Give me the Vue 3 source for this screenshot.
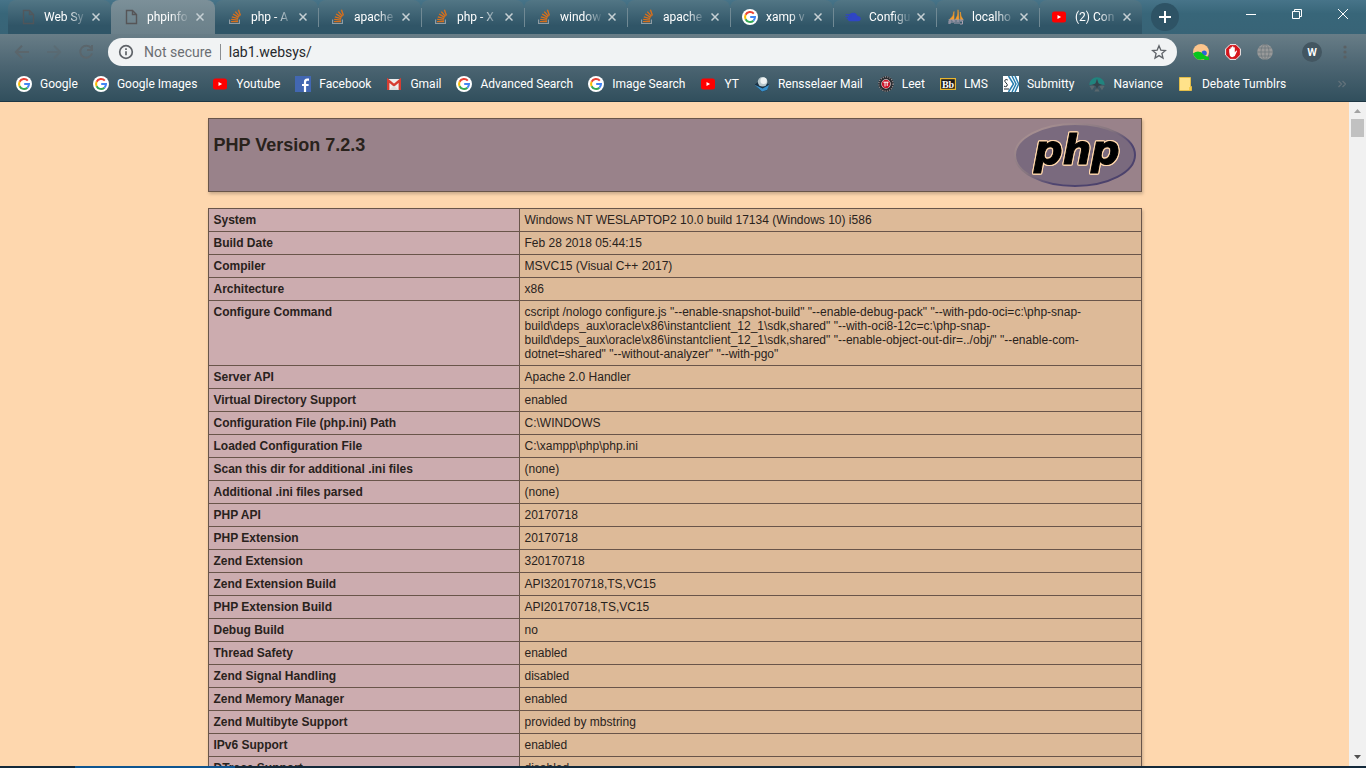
<script setup>
import { ref } from 'vue'

const tabs = [
  { title: 'Web Sy', icon: 'page' },
  { title: 'phpinfo', icon: 'page', active: true },
  { title: 'php - A', icon: 'stack' },
  { title: 'apache', icon: 'stack' },
  { title: 'php - X', icon: 'stack' },
  { title: 'window', icon: 'stack' },
  { title: 'apache', icon: 'stack' },
  { title: 'xamp v', icon: 'google' },
  { title: 'Configu', icon: 'cloud' },
  { title: 'localho', icon: 'pma' },
  { title: '(2) Con', icon: 'youtube' }
]

const bookmarks = [
  { title: 'Google', icon: 'google' },
  { title: 'Google Images', icon: 'google' },
  { title: 'Youtube', icon: 'youtube' },
  { title: 'Facebook', icon: 'facebook' },
  { title: 'Gmail', icon: 'gmail' },
  { title: 'Advanced Search', icon: 'google' },
  { title: 'Image Search', icon: 'google' },
  { title: 'YT', icon: 'youtube' },
  { title: 'Rensselaer Mail', icon: 'mail' },
  { title: 'Leet', icon: 'leet' },
  { title: 'LMS', icon: 'bb' },
  { title: 'Submitty', icon: 'submitty' },
  { title: 'Naviance', icon: 'naviance' },
  { title: 'Debate Tumblrs', icon: 'folder' }
]

const rows = [
  ['System', 'Windows NT WESLAPTOP2 10.0 build 17134 (Windows 10) i586'],
  ['Build Date', 'Feb 28 2018 05:44:15'],
  ['Compiler', 'MSVC15 (Visual C++ 2017)'],
  ['Architecture', 'x86'],
  ['Configure Command', 'cscript /nologo configure.js "--enable-snapshot-build" "--enable-debug-pack" "--with-pdo-oci=c:\\php-snap-\nbuild\\deps_aux\\oracle\\x86\\instantclient_12_1\\sdk,shared" "--with-oci8-12c=c:\\php-snap-\nbuild\\deps_aux\\oracle\\x86\\instantclient_12_1\\sdk,shared" "--enable-object-out-dir=../obj/" "--enable-com-\ndotnet=shared" "--without-analyzer" "--with-pgo"'],
  ['Server API', 'Apache 2.0 Handler'],
  ['Virtual Directory Support', 'enabled'],
  ['Configuration File (php.ini) Path', 'C:\\WINDOWS'],
  ['Loaded Configuration File', 'C:\\xampp\\php\\php.ini'],
  ['Scan this dir for additional .ini files', '(none)'],
  ['Additional .ini files parsed', '(none)'],
  ['PHP API', '20170718'],
  ['PHP Extension', '20170718'],
  ['Zend Extension', '320170718'],
  ['Zend Extension Build', 'API320170718,TS,VC15'],
  ['PHP Extension Build', 'API20170718,TS,VC15'],
  ['Debug Build', 'no'],
  ['Thread Safety', 'enabled'],
  ['Zend Signal Handling', 'disabled'],
  ['Zend Memory Manager', 'enabled'],
  ['Zend Multibyte Support', 'provided by mbstring'],
  ['IPv6 Support', 'enabled'],
  ['DTrace Support', 'disabled']
]

const address = ref('lab1.websys/')
</script>

<template>
  <div class="browser">
    <svg class="defs" aria-hidden="true">
      <symbol id="i-page" viewBox="0 0 16 16">
        <path d="M3.5 1.5h6l4 4v9h-10zM9.5 1.5v4h4" fill="none" stroke="#565557" stroke-width="1.4" />
      </symbol>
      <symbol id="i-stack" viewBox="0 0 16 16">
        <path d="M2.6 10.5v4h9.8v-4" fill="none" stroke="#8f9ca4" stroke-width="1.2" />
        <path d="M4 12.6h7M4.2 10.4l6.8.7M4.8 7.8l6.4 1.8M6.1 5l5.6 3.4M8.3 2.6l4.2 4.8M11.4.8l2 5.8" fill="none" stroke="#d8701c" stroke-width="1.4" />
      </symbol>
      <symbol id="i-google" viewBox="0 0 16 16">
        <circle cx="8" cy="8" r="8" fill="#fff" />
        <path d="M11.8 4.7A5 5 0 0 0 3.6 5.8" fill="none" stroke="#ea4335" stroke-width="2" />
        <path d="M3.6 5.8a5 5 0 0 0 0 4.4" fill="none" stroke="#fbbc05" stroke-width="2" />
        <path d="M3.6 10.2a5 5 0 0 0 7.8 1.5" fill="none" stroke="#34a853" stroke-width="2" />
        <path d="M11.4 11.7A5 5 0 0 0 13 8H8.2" fill="none" stroke="#4285f4" stroke-width="2" />
      </symbol>
      <symbol id="i-youtube" viewBox="0 0 16 16">
        <rect x="1" y="2.5" width="14" height="11" rx="2.5" fill="#f00" />
        <path d="M6.5 6v4l3.6-2z" fill="#fff" />
      </symbol>
      <symbol id="i-facebook" viewBox="0 0 16 16">
        <path d="M0 0h16v16H0z" fill="#4267b2" />
        <path d="M10 16V6.2Q10 3.6 12.2 3.6H14M7 9h6.6" fill="none" stroke="#fff" stroke-width="2.2" />
      </symbol>
      <symbol id="i-gmail" viewBox="0 0 16 16">
        <path d="M1 3h14v11H1z" fill="#eee" />
        <path d="M2.2 14V4.4L8 9.2l5.8-4.8V14" fill="none" stroke="#d63d32" stroke-width="2.4" />
        <path d="M3.4 14 8 9.8l4.6 4.2z" fill="#ddd" />
      </symbol>
      <symbol id="i-cloud" viewBox="0 0 16 16">
        <path d="M4.5 12.3a3 3 0 0 1-.6-5.2Q5 3.6 8.6 3.8q3 .2 3.9 3.2 3.4.3 3.3 3-.2 2.3-2.9 2.3z" fill="#2f46c4" />
        <path d="M.8 5.7h6M.2 7.7h6M1.5 9.7h4" stroke="#2f46c4" />
      </symbol>
      <symbol id="i-pma" viewBox="0 0 16 16">
        <path d="M6 2.5Q6 7 1.5 10.5H6zM10 .8q.4 6-2.5 9.7H11zM12.3 3q.2 5 2.7 7.5h-2.5z" fill="#f89c28" stroke="#f89c28" stroke-width=".6" />
        <path d="M.5 11h15M1 15v-3h2v2H1m4-3v3m0-2h2v3m2-3v3m0-3h2v3m1-3h2.5v3H12" stroke="#aaa0b0" fill="none" />
      </symbol>
      <symbol id="i-mail" viewBox="0 0 16 16">
        <path d="M.8 8.5 7 4l8.2 4.8-2.4 5.6-5.2 1.2z" fill="#1a3144" />
        <path d="M.6 8.7 8.6 12.6l6.7-3.9-2.2 5.2-5.1 1.7z" fill="#388fca" />
        <circle cx="8.6" cy="5.8" r="4.8" fill="#b9c8cc" />
        <circle cx="9.6" cy="4.7" r="3.2" fill="#eef2f2" />
      </symbol>
      <symbol id="i-leet" viewBox="0 0 16 16">
        <circle cx="8" cy="8" r="6.2" fill="#eee" stroke="#2b2c30" stroke-width="3" />
        <circle cx="8" cy="8" r="7.1" fill="none" stroke="#a09a9c" stroke-width="1.3" stroke-dasharray="1 1.3" />
        <circle cx="8" cy="8" r="4.2" fill="#cc1528" />
        <path d="M5.4 6.2h5.2M7 6v4.5M9.2 6v4" stroke="#fff" />
      </symbol>
      <symbol id="i-bb" viewBox="0 0 16 16">
        <path d="M.6 2.6h14.8v10.8H.6z" fill="#19191b" stroke="#e8b630" stroke-width="1.2" />
        <text x="8" y="11.5" text-anchor="middle" font-family="Liberation Serif, serif" font-size="10" font-weight="700" fill="#fff">Bb</text>
      </symbol>
      <symbol id="i-submitty" viewBox="0 0 16 16">
        <path d="M0 0h16v16H0z" fill="#fff" />
        <path d="M4.8 4Q3 2.8 1.8 4.3q-.2 1.5 1.2 2.6 2 1.6 1 3.1-1.2 1.2-3 .2M1 13h5" fill="none" stroke="#222d33" />
        <path d="m5.5 0 5 8-5 8M9 0l4 8-4 8M12 0l3.6 8-3.6 8" fill="none" stroke="#277eae" stroke-width="1.5" />
      </symbol>
      <symbol id="i-naviance" viewBox="0 0 16 16">
        <path d="M.3 9a7.7 7.7 0 1 1 15.4 0L10 8 8 3 6 8z" fill="#21847e" />
        <path d="m.5 10 5.7-.8L3 14.3zm15 0-5.7-.8 3.2 5.1zM8 11l2.6 4.4H5.4z" fill="#5a686e" />
        <path d="m8 3 1.2 4.2L13 9l-3.8 1L8 14l-1.2-4L3 9l3.8-1.8z" fill="#34444c" />
      </symbol>
      <symbol id="i-folder" viewBox="0 0 16 16">
        <path d="M1.5 1.5h11v9h1v4h-12z" fill="#ffe28a" stroke="#e3bd48" />
        <path d="M11 11h2v3h-2z" fill="#f5cc4e" />
      </symbol>
    </svg>

    <header class="chrome">
      <div class="strip">
        <nav class="tabs" aria-label="Tabs">
          <div v-for="(t, i) in tabs" :key="i" class="tab" :class="{ active: t.active }">
            <button class="tab-main" type="button">
              <svg class="ico" :class="{ faint: t.icon === 'page' && !t.active }"><use :href="'#i-' + t.icon" /></svg>
              <span class="tab-title">{{ t.title }}</span>
            </button>
            <button class="close" type="button" aria-label="Close tab">
              <svg viewBox="0 0 8 8"><path d="m.5.5 7 7m0-7-7 7" /></svg>
            </button>
          </div>
        </nav>
        <button class="newtab" type="button" aria-label="New tab">
          <svg viewBox="0 0 12 12"><path d="M6 0v12M0 6h12" /></svg>
        </button>
        <div class="winctl">
          <button type="button" aria-label="Minimize"><svg viewBox="0 0 10 10"><path d="M0 5.5h10" /></svg></button>
          <button type="button" aria-label="Restore"><svg viewBox="0 0 10 10"><path d="M.5 2.5h7v7h-7zM2.5 2.5v-2h7v7h-2" /></svg></button>
          <button type="button" aria-label="Close"><svg viewBox="0 0 10 10"><path d="m0 0 10 10M10 0 0 10" /></svg></button>
        </div>
      </div>

      <div class="toolbar">
        <div class="nav">
          <button type="button" aria-label="Back"><svg viewBox="0 0 16 16"><path d="M15 8H2M8 1.8 1.8 8 8 14.2" /></svg></button>
          <button type="button" class="dim" aria-label="Forward"><svg viewBox="0 0 16 16"><path d="M1 8h13M8 1.8 14.2 8 8 14.2" /></svg></button>
          <button type="button" aria-label="Reload"><svg viewBox="0 0 16 16"><path d="M13.2 4.2a6 6 0 1 0 .8 5.3M14 1v5H9" /></svg></button>
        </div>
        <div class="omnibox">
          <svg class="info" viewBox="0 0 16 16"><circle cx="8" cy="8" r="6.3" /><path d="M8 7.2v4M8 4.3v1.6" /></svg>
          <label for="url">Not secure</label>
          <input id="url" v-model="address" type="text" spellcheck="false">
          <button type="button" aria-label="Bookmark this page">
            <svg viewBox="0 0 16 16"><path d="m8 1.8 1.8 4.3 4.7.4-3.6 3 1.1 4.6-4-2.5-4 2.5 1.1-4.6-3.6-3 4.7-.4z" /></svg>
          </button>
        </div>
        <div class="ext">
          <button type="button" aria-label="Avatar extension">
            <svg viewBox="0 0 16 16"><circle cx="8" cy="8" r="8" fill="#fcc58c" /><circle cx="11.2" cy="9" r="2.6" fill="#2e63d8" /><path d="M0 9.5Q6 5 11 11l2.5 1.2 2.5 1v2.8H12l-1-1q-8 3-11-5.5z" fill="#08c51d" /></svg>
          </button>
          <button type="button" aria-label="Ad blocker">
            <svg viewBox="0 0 16 16"><path d="M5 .6h6L15.4 5v6L11 15.4H5L.6 11V5z" fill="#d4151c" stroke="#eee" /><path d="M4.2 8V5q.7-.6 1.3 0v3V3.5q.7-.7 1.4 0V7.5v-5q.8-.7 1.5 0v5-4q.7-.6 1.4 0v5l1.4-2q1 0 .8.8L9.8 12q-3.3 2.5-5-.4z" fill="#fff" /></svg>
          </button>
          <button type="button" aria-label="Globe extension">
            <svg viewBox="0 0 16 16"><circle cx="8" cy="8" r="7.8" fill="#999a9a" /><path d="M8 0v16M0 8h16M1.5 4h13M1.5 12h13" stroke="#6d777c" stroke-width=".8" fill="none" /><ellipse cx="8" cy="8" rx="4" ry="7.8" stroke="#6d777c" stroke-width=".8" fill="none" /></svg>
          </button>
          <button type="button" class="avatar" aria-label="Profile">W</button>
          <button type="button" aria-label="Menu">
            <svg viewBox="0 0 16 16"><g fill="#5a6063"><circle cx="7" cy="3" r="1.6" /><circle cx="7" cy="8" r="1.6" /><circle cx="7" cy="13" r="1.6" /></g></svg>
          </button>
        </div>
      </div>

      <nav class="bookmarks" aria-label="Bookmarks">
        <a v-for="(b, i) in bookmarks" :key="i" href="#">
          <svg class="ico"><use :href="'#i-' + b.icon" /></svg>{{ b.title }}
        </a>
        <button class="more" type="button" aria-label="More bookmarks">
          <svg viewBox="0 0 8 8"><path d="m.5 1 3 3-3 3M4.5 1l3 3-3 3" /></svg>
        </button>
      </nav>
    </header>

    <div class="viewport">
      <main class="page">
        <section class="banner">
          <h1>PHP Version 7.2.3</h1>
          <svg class="logo" viewBox="0 0 122 66" role="img" aria-label="PHP logo">
            <defs>
              <linearGradient id="rim" x1="0" y1="0" x2="1" y2="1">
                <stop offset="0" stop-color="#b49a98" />
                <stop offset=".45" stop-color="#85757f" />
                <stop offset=".65" stop-color="#4e4470" />
                <stop offset="1" stop-color="#4a4068" />
              </linearGradient>
            </defs>
            <ellipse cx="61" cy="33" rx="60" ry="31" fill="#7a6a7e" stroke="url(#rim)" stroke-width="2" />
            <text x="20" y="42">php</text>
          </svg>
        </section>
        <table>
          <tbody>
            <tr v-for="r in rows" :key="r[0]">
              <th scope="row">{{ r[0] }}</th>
              <td>{{ r[1] }}</td>
            </tr>
          </tbody>
        </table>
      </main>
      <div class="scrollbar" aria-hidden="true">
        <svg viewBox="0 0 7 4"><path d="M0 4 3.5 0 7 4z" fill="#a3a3a3" /></svg>
        <div class="thumb"></div>
        <svg viewBox="0 0 7 4"><path d="M0 0h7L3.5 4z" fill="#505050" /></svg>
      </div>
    </div>
    <div class="taskbar"></div>
  </div>
</template>

<style>
body {
  margin: 0;
  overflow: hidden;
}
</style>

<style scoped>
* {
  box-sizing: border-box;
}
.browser {
  height: 100vh;
  display: flex;
  flex-direction: column;
  font: 12px Roboto, "Open Sans", sans-serif;
  color: #fff;
}
.defs {
  position: absolute;
  width: 0;
  height: 0;
}
button {
  border: 0;
  padding: 0;
  background: none;
  color: inherit;
  font: inherit;
  display: flex;
  align-items: center;
  justify-content: center;
}
svg {
  display: block;
  flex: none;
}
.ico {
  width: 16px;
  height: 16px;
}
.faint {
  opacity: 0.8;
}
.strip {
  display: flex;
  height: 34px;
  padding-left: 8px;
  background: linear-gradient(#477489, #386679 40%, #386477);
}
.tabs {
  display: flex;
}
.tab {
  width: 103px;
  display: flex;
  align-items: center;
  padding: 0 11px 0 12px;
  border-radius: 8px 8px 0 0;
  background: linear-gradient(#527685, #305567 75%, #2f5567);
  position: relative;
}
.tab.active {
  width: 104px;
  background: linear-gradient(#7c9099, #71868f 50%, #6b808a);
}
.tab:nth-child(n + 4)::before {
  content: "";
  position: absolute;
  left: 0;
  top: 8px;
  width: 1px;
  height: 19px;
  background: #708994;
}
.tab-main {
  flex: 1;
  min-width: 0;
  justify-content: flex-start;
  gap: 8px;
}
.tab-title {
  width: 43px;
  white-space: nowrap;
  text-align: left;
  mask-image: linear-gradient(90deg, #000 55%, transparent);
}
.close svg {
  width: 8px;
  height: 8px;
}
.close path {
  stroke: #c6d0d4;
  stroke-width: 1.5;
}
.newtab {
  align-self: center;
  width: 28px;
  height: 28px;
  margin-left: 9px;
  border-radius: 50%;
  background: #2e5365;
}
.newtab svg {
  width: 12px;
  height: 12px;
}
.newtab path {
  stroke: #fff;
  stroke-width: 2;
}
.winctl {
  display: flex;
  margin-left: auto;
  height: 28px;
}
.winctl button {
  width: 46px;
}
.winctl svg {
  width: 10px;
  height: 10px;
}
.winctl path {
  fill: none;
  stroke: #fff;
}
.chrome {
  height: 102px;
  border-bottom: 1px solid #1e3744;
  background: linear-gradient(#687d87 34px, #4c6572 66px, #314f5d 101px);
}
.toolbar {
  display: flex;
  align-items: center;
  height: 36px;
}
.nav {
  display: flex;
  gap: 16px;
  padding: 0 14px;
}
.nav svg {
  width: 16px;
  height: 16px;
}
.nav path {
  fill: none;
  stroke: #5b666c;
  stroke-width: 2;
}
.nav .dim {
  opacity: 0.5;
}
.omnibox {
  flex: 1;
  height: 28px;
  display: flex;
  align-items: center;
  padding: 0 10px;
  border-radius: 14px;
  background: #f1f3f4;
  font-size: 14px;
  color: #6b6e72;
}
.omnibox svg {
  width: 16px;
  height: 16px;
  fill: none;
  stroke: #5f6368;
  stroke-width: 1.3;
}
.omnibox .info {
  stroke-width: 1.7;
}
.omnibox label {
  margin-left: 10px;
  padding-right: 8px;
  line-height: 16px;
  border-right: 1px solid #8b8e91;
}
.omnibox input {
  flex: 1;
  min-width: 0;
  border: 0;
  padding: 0 8px;
  outline: 0;
  background: none;
  font: inherit;
  color: #25282c;
}
.ext {
  display: flex;
  align-items: center;
  gap: 16px;
  padding: 0 12px 0 16px;
}
.ext svg {
  width: 16px;
  height: 16px;
}
.avatar {
  width: 20px;
  height: 20px;
  margin-left: 13px;
  border-radius: 50%;
  background: #435661;
  font-size: 11px;
  font-weight: 600;
}
.bookmarks {
  display: flex;
  align-items: center;
  gap: 15px;
  height: 28px;
  padding: 0 20px 0 16px;
}
.bookmarks a {
  display: flex;
  align-items: center;
  gap: 8px;
  color: #fff;
  text-decoration: none;
  white-space: nowrap;
}
.more {
  margin-left: auto;
}
.more svg {
  width: 8px;
  height: 8px;
}
.more path {
  fill: none;
  stroke: #61717a;
  stroke-width: 1.3;
}
.viewport {
  flex: 1;
  min-height: 0;
  display: flex;
  background: #fed7ae;
}
.page {
  flex: 1;
  overflow: hidden;
  padding-top: 16px;
  font: 12px/14px "Liberation Sans", Arial, sans-serif;
  color: #29221c;
}
.banner,
table {
  width: 934px;
  max-width: 100%;
  margin: 0 auto 16px;
  box-shadow: 1px 2px 3px #c8a98a;
}
.banner {
  display: flex;
  justify-content: space-between;
  align-items: flex-start;
  height: 74px;
  padding: 3px 5px;
  border: 1px solid #69554a;
  background: #99828a;
}
h1 {
  margin: 12px 0 0;
  font-size: 18px;
  line-height: 22px;
}
.logo {
  width: 122px;
  height: 66px;
}
.logo text {
  font: italic 700 40px "DejaVu Sans", sans-serif;
  fill: #000;
  stroke: #000;
  stroke-width: 1px;
  filter: drop-shadow(1px 0 0 #ffd7ac) drop-shadow(-1px 0 0 #ffd7ac) drop-shadow(0 1px 0 #ffd7ac) drop-shadow(0 -1px 0 #ffd7ac);
}
table {
  border-collapse: collapse;
}
th,
td {
  padding: 4px 5px;
  border: 1px solid #69554a;
  text-align: left;
  vertical-align: top;
  white-space: pre-wrap;
}
th {
  width: 311px;
  background: #ccacaf;
}
td {
  background: #ddba98;
}
.scrollbar {
  width: 17px;
  display: flex;
  flex-direction: column;
  align-items: center;
  padding: 7px 0;
  background: #f1f1f1;
}
.scrollbar svg {
  width: 7px;
  height: 4px;
}
.thumb {
  width: 13px;
  height: 18px;
  margin: 6px 0 auto;
  background: #c1c1c1;
}
.taskbar {
  height: 2px;
  background: linear-gradient(90deg, #13293b 75px, #0e5590 75px 235px, #13293b 235px);
}
</style>
